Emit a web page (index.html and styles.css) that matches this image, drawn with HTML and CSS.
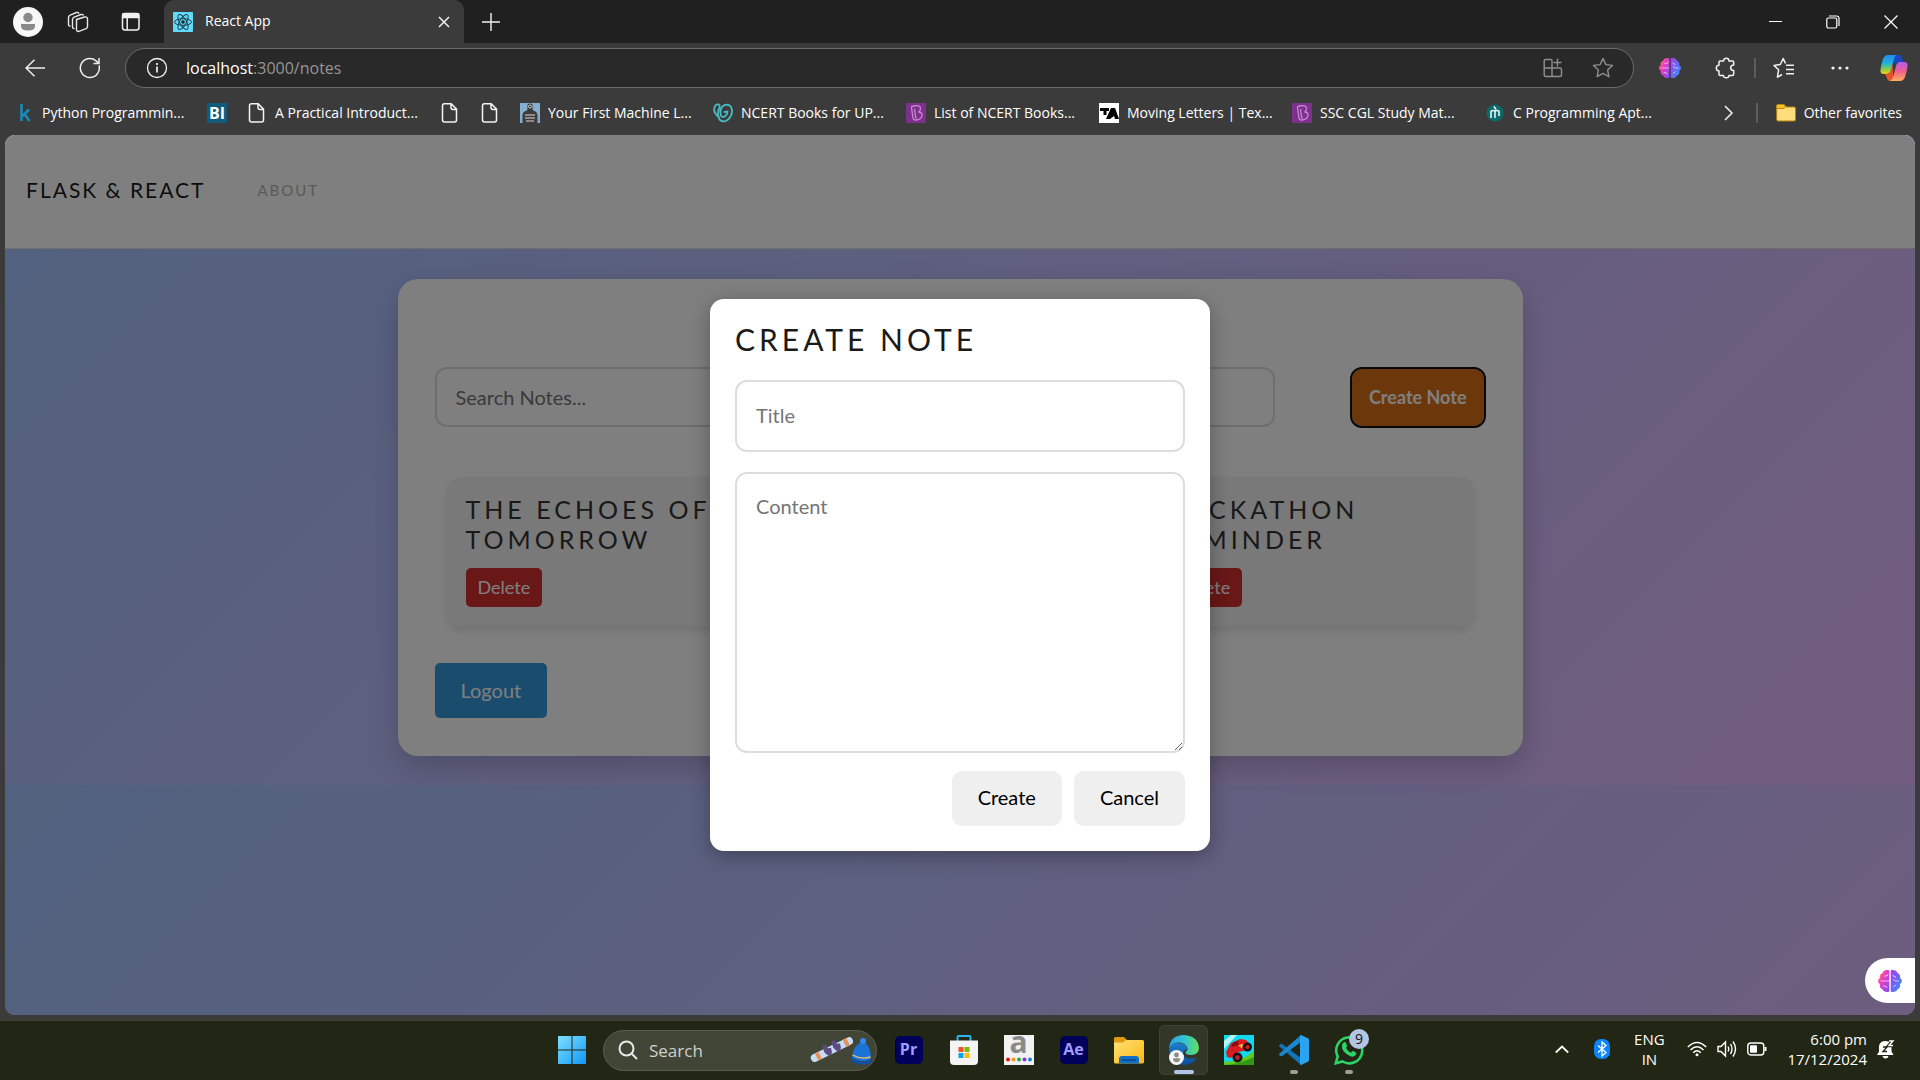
FILE: index.html
```
<!DOCTYPE html>
<html lang="en">
<head>
<meta charset="utf-8">
<title>React App</title>
<link rel="stylesheet" href="styles.css">
</head>
<body>
<svg class="defs" aria-hidden="true">
  <defs>
    <linearGradient id="brainL" x1="0" y1="0" x2="1" y2="1"><stop offset="0" stop-color="#ff9a2e"/><stop offset=".4" stop-color="#f03cc3"/><stop offset="1" stop-color="#7a4df0"/></linearGradient>
    <linearGradient id="brainR" x1="0" y1="0" x2="1" y2="1"><stop offset="0" stop-color="#b03df0"/><stop offset=".5" stop-color="#6a66f5"/><stop offset="1" stop-color="#27a4f5"/></linearGradient>
    <linearGradient id="copA" x1="0" y1="0" x2="0" y2="1"><stop offset="0" stop-color="#1f8cf0"/><stop offset=".45" stop-color="#22b3d8"/><stop offset=".75" stop-color="#8ccb4a"/><stop offset="1" stop-color="#f8d013"/></linearGradient>
    <linearGradient id="copB" x1="0" y1="0" x2="0" y2="1"><stop offset="0" stop-color="#b15cf0"/><stop offset=".5" stop-color="#f0608c"/><stop offset="1" stop-color="#ffae5c"/></linearGradient>
    <linearGradient id="winG" x1="0" y1="0" x2="1" y2="1"><stop offset="0" stop-color="#7fe0ff"/><stop offset="1" stop-color="#0f97f7"/></linearGradient>
    <linearGradient id="edgeA" x1="0" y1="0" x2="1" y2="0"><stop offset="0" stop-color="#2f9fe6"/><stop offset=".5" stop-color="#2fc2d6"/><stop offset="1" stop-color="#66e05a"/></linearGradient>
    <linearGradient id="edgeB" x1="0" y1="0" x2="0" y2="1"><stop offset="0" stop-color="#1b7fd0"/><stop offset="1" stop-color="#0d4a9c"/></linearGradient>
    <linearGradient id="foldG" x1="0" y1="0" x2="1" y2="1"><stop offset="0" stop-color="#ffe07a"/><stop offset="1" stop-color="#fbb90e"/></linearGradient>
    <symbol id="brain" viewBox="0 0 24 24">
      <path fill="url(#brainL)" d="M11.300 1.500C8 .3 5 2 4.500 4 2.500 4.500 1.200 7 2 9 -.5 10 -.5 14 2 15c-.8 2.500.4 4.500 2.400 5.200C5.500 22.800 9 23.700 11.300 22.400z"/>
      <path fill="url(#brainR)" d="M12.700 1.500C16 .3 19 2 19.500 4c2 .5 3.300 3 2.500 5 2.500 1 2.500 5 0 6 .8 2.500-.4 4.500-2.400 5.200-1.100 2.600-4.600 3.500-6.900 2.200z"/>
      <path fill="none" stroke="#ffffff" stroke-opacity=".65" stroke-width="1" d="M2.500 12h8.500M6 7h2q2 0 2-2M5 17h2q2 0 2 2M21 12h-4l-2-2M15 6q0 2 3 2M15 18l3-2"/>
    </symbol>
    <symbol id="doc" viewBox="0 0 20 20"><path fill="none" stroke="#f4f4f4" stroke-width="1.500" d="M4.500.8h6.700l5.300 5.300v11q0 2-2 2h-10q-2 0-2-2v-14.300q0-2 2-2zM11 1v3.500q0 2 2 2h3.500"/></symbol>
    <symbol id="bee" viewBox="0 0 20 20"><rect width="20" height="20" rx="1" fill="#7f2f8c"/><path fill="none" stroke="#c58bcf" stroke-width="1.300" d="M5.500 4.500q0-1.500 2-1.500 7-1.500 7 2.500 0 2.500-2 3.500 3.500 0 3.500 3 0 4.500-6 5-2.800.3-3-2zM8.500 6l1 8q.3 1.300 1.500.8"/></symbol>
  </defs>
</svg>

<header class="chrome">
  <div class="tabstrip">
    <button class="slot slot-avatar" aria-label="Profile"><svg width="30" height="30" viewBox="0 0 30 30"><circle cx="15" cy="15" r="15" fill="#f7f7f7"/><circle cx="15" cy="10.500" r="4.700" fill="#8a8a8a"/><path fill="#8a8a8a" d="M8 17h14v2q0 4.500-7 4.500T8 19z"/></svg></button>
    <button class="slot slot-53" aria-label="Workspaces"><svg width="22" height="22" viewBox="0 0 22 22" fill="none" stroke="#e8e8e8" stroke-width="1.400"><path d="M9.500 8.500l8-2.500q2.500-.6 3 1.500v8q0 1.500-1.500 2.200l-7 2.600q-2.300.6-2.500-1.500z"/><path d="M7.500 17.500q-2 .3-2-1.700V8.500q0-1.800 1.600-2.400L14 3.500q1.700-.4 2.600 1"/><path d="M3.500 15q-2 .3-2-1.700V6.500q0-1.800 1.600-2.400L9.500 1.500q1.700-.4 2.600 1"/></svg></button>
    <button class="slot slot-53" aria-label="Tab actions"><svg width="20" height="20" viewBox="0 0 20 20" fill="none" stroke="#f2f2f2" stroke-width="1.500"><rect x="1.500" y="1.500" width="16.500" height="16.500" rx="2.500"/><path d="M6.200 6v12"/><path fill="#f2f2f2" d="M2 2h15.500v3.500H2z"/></svg></button>
    <div class="tab">
      <svg width="20" height="20" viewBox="0 0 20 20"><rect width="20" height="20" rx="1" fill="#61dafb"/><g fill="none" stroke="#20404c" stroke-width="1"><ellipse cx="10" cy="10" rx="8.500" ry="3.300"/><ellipse cx="10" cy="10" rx="8.500" ry="3.300" transform="rotate(60 10 10)"/><ellipse cx="10" cy="10" rx="8.500" ry="3.300" transform="rotate(120 10 10)"/></g><circle cx="10" cy="10" r="1.800" fill="#16282f"/></svg>
      <span class="tab-title">React App</span>
      <button class="tab-close" aria-label="Close tab"><svg width="12" height="12" viewBox="0 0 12 12" stroke="#f2f2f2" stroke-width="1.500"><path d="M1 1l10 10M11 1L1 11"/></svg></button>
    </div>
    <button class="slot slot-53" aria-label="New tab"><svg width="18" height="18" viewBox="0 0 18 18" stroke="#f2f2f2" stroke-width="1.400"><path d="M9 0v18M0 9h18"/></svg></button>
    <div class="spacer"></div>
    <button class="slot slot-58" aria-label="Minimize"><svg width="13" height="13" viewBox="0 0 13 13" stroke="#fff"><path d="M0 6.500h13"/></svg></button>
    <button class="slot slot-58" aria-label="Restore"><svg width="14" height="14" viewBox="0 0 14 14" fill="none" stroke="#fff" stroke-width="1.200"><rect x=".8" y="3" width="10" height="10" rx="1.500"/><path d="M3 1h7.500q2.500 0 2.500 2.500V11"/></svg></button>
    <button class="slot slot-58" aria-label="Close"><svg width="14" height="14" viewBox="0 0 14 14" stroke="#fff" stroke-width="1.200"><path d="M.5.5l13 13M13.500.5l-13 13"/></svg></button>
  </div>

  <div class="toolbar">
    <button class="slot slot-tool" aria-label="Back"><svg width="20" height="18" viewBox="0 0 20 18" fill="none" stroke="#efefef" stroke-width="1.500"><path d="M20 9H1M9.500.7L1 9l8.500 8.300"/></svg></button>
    <button class="slot slot-tool" aria-label="Refresh"><svg width="22" height="22" viewBox="0 0 22 22" fill="none" stroke="#efefef" stroke-width="1.500"><path d="M20 8.500A9.500 9.500 0 1 1 16.800 3.600L19.700 6M20 1v5.500h-5.500"/></svg></button>
    <div class="address">
      <svg width="22" height="22" viewBox="0 0 22 22" fill="none" stroke="#f2f2f2" stroke-width="1.300"><circle cx="11" cy="11" r="9.500"/><path stroke-width="1.700" d="M11 9.500v6M11 6v2"/></svg>
      <span class="url">localhost<span class="url-path">:3000/notes</span></span>
      <button class="slot slot-50" aria-label="Install app"><svg width="20" height="20" viewBox="0 0 20 20" fill="none" stroke="#8f8f8f" stroke-width="1.400"><path d="M2.500 1.500H8q1 0 1 1V18.500H3q-1.800 0-1.800-1.800V3q0-1.500 1.300-1.500zM1.200 10h15.600q1.700 0 1.700 1.500V17q0 1.500-1.500 1.500H9M14.500.5v8M10.500 4.500h8"/></svg></button>
      <button class="slot slot-50" aria-label="Favorite"><svg width="22" height="22" viewBox="0 0 22 22" fill="none" stroke="#8f8f8f" stroke-width="1.400" stroke-linejoin="round"><path d="M11 1.500l2.900 6.100 6.600.8-4.900 4.600 1.300 6.700-5.900-3.300-5.900 3.300 1.300-6.700L1.500 8.400l6.600-.8z"/></svg></button>
    </div>
    <button class="slot slot-56" aria-label="Brain extension"><svg width="22" height="22"><use href="#brain"/></svg></button>
    <button class="slot slot-56" aria-label="Extensions"><svg width="22" height="22" viewBox="0 0 22 22" fill="none" stroke="#f2f2f2" stroke-width="1.500" stroke-linejoin="round"><path d="M5 4h3.500q0-2.700 2.700-2.700T14 4h3.500q1.200 0 1.200 1.200V8q-3 0-3 2.800t3 2.800V17q0 1.500-1.500 1.500H14q0 2.300-2.800 2.300T8.500 18.500H5q-1 0-1-1.200V14q-2.700 0-2.700-2.900T4 8.200V5.200Q4 4 5 4z"/></svg></button>
    <span class="rule"></span>
    <button class="slot slot-56" aria-label="Favorites"><svg width="22" height="22" viewBox="0 0 22 22" fill="none" stroke="#f2f2f2" stroke-width="1.500" stroke-linejoin="round"><path d="M12.500 6.500L10.200 1.500 7.300 7.500 1 8.400l4.600 4.400-1.200 7.400 4.600-2.700M13 8.200h8M13 12.500h8M13 16.800h8"/></svg></button>
    <button class="slot slot-56" aria-label="More"><svg width="18" height="4" viewBox="0 0 18 4" fill="#f2f2f2"><circle cx="2" cy="2" r="1.600"/><circle cx="9" cy="2" r="1.600"/><circle cx="16" cy="2" r="1.600"/></svg></button>
    <button class="slot slot-52" aria-label="Copilot"><svg width="28" height="28" viewBox="0 0 28 28"><path fill="#1747c4" d="M14 1h5q2 0 2.700 2L23 8h-5l-4 2z"/><path fill="url(#copA)" d="M8 1h9q-2 0-3 4l-3 11q-1 4-5 4H4q-4 0-3.500-4Q1 11 3 5 4.500 1 8 1z"/><path fill="#e8542a" d="M5 20q5 1 6-4l2-5v14q-1 2-3 2-2.500 0-3.500-4z"/><path fill="url(#copB)" d="M20 8h4q4 0 3.600 4-.6 5-2.600 11-1.500 4-5 4H9q3-.5 4-4l3-11q1-4 4-4z"/></svg></button>
  </div>

  <nav class="bookmarks">
    <a class="bm" href="#"><svg width="20" height="20" viewBox="0 0 20 20" fill="none" stroke="#1a8bb8" stroke-width="2.600"><path d="M7.500 1v17M15 6.500L8.500 13M10.500 11l5 7"/></svg><span class="bm-text">Python Programmin...</span></a>
    <a class="bm" href="#" aria-label="BI"><span class="bi">BI</span></a>
    <a class="bm" href="#"><svg width="20" height="20"><use href="#doc"/></svg><span class="bm-text">A Practical Introduct...</span></a>
    <a class="bm" href="#" aria-label="Page"><svg width="20" height="20"><use href="#doc"/></svg></a>
    <a class="bm" href="#" aria-label="Page"><svg width="20" height="20"><use href="#doc"/></svg></a>
    <a class="bm" href="#"><svg width="20" height="20" viewBox="0 0 20 20"><path fill="#86aed0" d="M0 0h20v20H0z"/><path fill="#3d3b3c" d="M7.500 1.500Q10-.5 12.500 1.500V6q0 1.500 3 2.500 2 1 2 3.500v8h-15v-8q0-2.500 2-3.500 3-1 3-2.500z"/><path stroke="#a9a5a1" stroke-width="1.500" d="M5 12h10M5 15h10M6 18h8"/><circle cx="10" cy="3.500" r="1.500" fill="none" stroke="#ccc"/></svg><span class="bm-text">Your First Machine L...</span></a>
    <a class="bm" href="#"><svg width="20" height="20" viewBox="0 0 20 20" fill="none" stroke="#46bcc4" stroke-width="1.800" stroke-linecap="round"><path d="M6 14Q.8 10 1.200 5.500 2 1 5.500 1.300 8 2 5.500 7 4 13 6.500 16.500q3.500 3.500 8 .5Q19.500 13 19 7q-.8-5-5-5.300Q8.500 2 7.500 8q-.5 6 2.500 6 4-.5 4.500-5.500l-3 .5"/></svg><span class="bm-text">NCERT Books for UP...</span></a>
    <a class="bm" href="#"><svg width="20" height="20"><use href="#bee"/></svg><span class="bm-text">List of NCERT Books...</span></a>
    <a class="bm" href="#"><svg width="20" height="20" viewBox="0 0 20 20"><path fill="#fff" d="M0 0h20v20H0z"/><path d="M1 5h9v3H7.500v4h-3V8H1zM12 5h4l4 11h-4l-1-3-4 3H7z"/></svg><span class="bm-text">Moving Letters | Tex...</span></a>
    <a class="bm" href="#"><svg width="20" height="20"><use href="#bee"/></svg><span class="bm-text">SSC CGL Study Mat...</span></a>
    <a class="bm" href="#"><svg width="20" height="20" viewBox="0 0 20 20"><circle cx="10" cy="10" r="8.500" fill="#0d6b6b"/><path fill="none" stroke="#e8f4f4" stroke-width="1.600" d="M6 15V9q0-1.500 2-1.500T10 9v6M10 9q0-1.500 2-1.500t2 1.500v4M9 3.500l2 3"/></svg><span class="bm-text">C Programming Apt...</span></a>
    <div class="spacer"></div>
    <button class="slot slot-53" aria-label="More bookmarks"><svg width="10" height="16" viewBox="0 0 10 16" fill="none" stroke="#f2f2f2" stroke-width="1.500"><path d="M1 1l7 7-7 7"/></svg></button>
    <span class="rule"></span>
    <a class="bm other" href="#"><svg width="20" height="20" viewBox="0 0 20 20"><path fill="#ffdc7c" stroke="#b8860b" d="M.7 3q0-1.500 1.500-1.500H8l2 2.500h8q1.500 0 1.500 1.500v11q0 1.500-1.500 1.500H2.200Q.7 18 .7 16.500z"/><path fill="#f5c22a" stroke="#b8860b" d="M.7 3q0-1.500 1.500-1.500H8l1.500 2L8 5.500H.7z"/></svg><span>Other favorites</span></a>
  </nav>
</header>

<main class="page">
  <nav class="navbar">
    <a class="brand" href="#">FLASK &amp; REACT</a>
    <a class="nav-link" href="#">ABOUT</a>
  </nav>

  <section class="card">
    <div class="search-row">
      <input class="search" type="text" placeholder="Search Notes..." aria-label="Search notes">
      <button class="create-note">Create Note</button>
    </div>
    <div class="notes">
      <article class="note">
        <h4>THE ECHOES OF TOMORROW</h4>
        <button class="delete">Delete</button>
      </article>
      <article class="note note-last">
        <h4>HACKATHON REMINDER</h4>
        <button class="delete">Delete</button>
      </article>
    </div>
    <button class="logout">Logout</button>
  </section>

  <div class="overlay">
    <form class="modal">
      <h2>CREATE NOTE</h2>
      <input class="field" type="text" placeholder="Title" aria-label="Title">
      <textarea class="field area" placeholder="Content" aria-label="Content"></textarea>
      <div class="actions">
        <button type="button" class="btn">Create</button>
        <button type="button" class="btn">Cancel</button>
      </div>
    </form>
  </div>
  <button class="brain-tab" aria-label="Assistant"><svg width="26" height="24"><use href="#brain"/></svg></button>
</main>

<footer class="taskbar">
  <div class="apps">
    <button class="app" aria-label="Start"><svg width="30" height="30" viewBox="0 0 30 30" fill="url(#winG)"><path d="M1 1h13.500v13.500H1zM15.500 1H29v13.500H15.500zM1 15.500h13.500V29H1zM15.500 15.500H29V29H15.500z"/></svg></button>
    <label class="task-search">
      <svg width="20" height="20" viewBox="0 0 20 20" fill="none" stroke="#e8e8e8" stroke-width="2"><circle cx="8.500" cy="8.500" r="7"/><path d="M13.500 13.500l5.500 5.500"/></svg>
      <input type="text" placeholder="Search" aria-label="Search">
      <svg width="62" height="32" viewBox="0 0 62 32"><g transform="rotate(-26 22 16)"><rect x="0" y="12" width="46" height="8" rx="4" fill="#c4dcf5"/><path fill="#e8905c" d="M6 12h4v8H6zM37 12h4v8h-4z"/><path fill="#5c4a80" d="M16 8l4 1v4l3 1-1 4-2 3-3-1-2-5zM26 8l4 1v4l3 1-1 4-2 3-3-1-2-5z"/></g><path fill="#1a74d8" d="M43 24q1-12 8-15h5q6 4 6 16-9 5-19-1z"/><circle cx="54" cy="7" r="3" fill="#2b8cf0"/><path fill="none" stroke="#f5c26b" stroke-width="1.400" d="M43.500 21q9 5 18 2"/><path fill="#134f9c" d="M42 24q9 5 20 2v3q-9 4-19-1z"/></svg>
    </label>
    <button class="app" aria-label="Premiere Pro"><span class="adobe">Pr</span></button>
    <button class="app" aria-label="Store"><svg width="30" height="32" viewBox="0 0 30 32"><path fill="none" stroke="#2cb5ee" stroke-width="2" d="M8.500 8V3q0-1 1-1h11q1 0 1 1v5"/><path fill="#f4f4f4" d="M1 6.500h28V27q0 4-4 4H5q-4 0-4-4z"/><path fill="#f25022" d="M9.500 13h5v5h-5z"/><path fill="#7fba00" d="M15.500 13h5v5h-5z"/><path fill="#00a4ef" d="M9.500 19h5v5h-5z"/><path fill="#ffb900" d="M15.500 19h5v5h-5z"/></svg></button>
    <button class="app" aria-label="Amazon"><span class="amz"><span class="amz-a">a</span><svg width="28" height="5" viewBox="0 0 28 5"><circle cx="3" cy="2.500" r="2" fill="#e11"/><circle cx="8.500" cy="2.500" r="2" fill="#f39a1e"/><circle cx="14" cy="2.500" r="2" fill="#20a84a"/><circle cx="19.500" cy="2.500" r="2" fill="#9030d0"/><circle cx="25" cy="2.500" r="2" fill="#1583e0"/></svg></span></button>
    <button class="app" aria-label="After Effects"><span class="adobe">Ae</span></button>
    <button class="app" aria-label="Explorer"><svg width="30" height="28" viewBox="0 0 30 28"><path fill="#e09a10" d="M0 2.500Q0 1 1.500 1H10l3 3-3 5H0z"/><path fill="url(#foldG)" d="M0 6.500h9l3-2.500h16.500Q30 4 30 5.500V26q0 1.500-1.500 1.500h-27Q0 27.500 0 26z"/><path fill="#1070c4" d="M5 27.500V23q0-3 3-3h14q3 0 3 3v4.500z"/><path stroke="#0a4a86" stroke-width="1.500" d="M8 24h14"/></svg></button>
    <button class="app active" aria-label="Edge"><svg width="30" height="30" viewBox="0 0 30 30"><path fill="url(#edgeB)" d="M0 15Q1 7 10 8q8 1 8 6-5 2-3.500 6 2 5 13 3-4 7-12.500 7Q1 29 0 15z"/><path fill="url(#edgeA)" d="M0 14Q1 0 15 0q14 1 15 13-.5 7-8 7-6 0-5.500-3 3-2 1.500-5Q15 7 9 7.500 2 8 0 14z"/><circle cx="7.500" cy="22.500" r="7.500" fill="#f7f7f7"/><circle cx="7.500" cy="20" r="2.400" fill="#8a8a8a"/><path fill="#8a8a8a" d="M4 23.300h7q0 4-3.500 4T4 23.300z"/></svg></button>
    <button class="app" aria-label="Game"><svg width="30" height="30" viewBox="0 0 30 30"><path fill="#12d8ee" d="M0 0h30v30H0z"/><path fill="#b5f4f8" d="M0 6l7-6h6L0 14z"/><path fill="#62c81c" d="M0 27q18 0 30-11v14H0z"/><path fill="#2f9a12" d="M0 30q16-1 30-8v8z"/><path fill="#d81c22" d="M2 17l5-9 9-4 6 1 5 5-3 5-10 2-7 6-4-1z"/><path fill="#7a1016" d="M7 12l2-4 5-2v4z"/><circle cx="13.500" cy="22.500" r="5" fill="#1c1014"/><circle cx="13.500" cy="22.500" r="2.200" fill="#c8232b"/><circle cx="23.500" cy="12" r="4.500" fill="#1c1014"/><circle cx="23.500" cy="12" r="2" fill="#c8232b"/><path stroke="#ffd21c" stroke-width="1.500" d="M15 11l3-1-1 3"/></svg></button>
    <button class="app running" aria-label="VS Code"><svg width="30" height="30" viewBox="0 0 30 30"><path fill="#1173b8" d="M2.500 8.500L22 23v7L.5 11.500q-.8-1 0-1.800z"/><path fill="#1a86d0" d="M2.500 21.500L22 7V0L.5 18.500q-.8 1 0 1.800z"/><path fill="#2aa3f0" d="M22 0l7 3.300q1 .6 1 1.700v20q0 1.100-1 1.700L22 30q-1 0-1-1V1q0-1 1-1z"/></svg></button>
    <button class="app running" aria-label="WhatsApp"><svg width="30" height="30" viewBox="0 0 30 30"><path fill="none" stroke="#2bd366" stroke-width="2.600" d="M1.800 28.300l1.900-7A13 13 0 1 1 8.600 26.500z"/><path fill="#2bd366" d="M9 8q2-2 3 0l1 2.500q.4 1-1 2.500 2 3.500 5 4.700 1.200-2 2.300-1.700l2.700 1.500q1 1-.5 2.800-2 2-5 1Q10 18.500 8 13 7.300 10 9 8z"/></svg><span class="badge">9</span></button>
  </div>
  <div class="tray">
    <button class="slot slot-40" aria-label="Hidden icons"><svg width="14" height="9" viewBox="0 0 14 9" fill="none" stroke="#fff" stroke-width="1.800"><path d="M.8 7.500L7 1.500l6.200 6"/></svg></button>
    <button class="slot slot-40" aria-label="Bluetooth"><svg width="16" height="20" viewBox="0 0 16 20"><rect width="16" height="20" rx="7" fill="#0a84ff"/><path fill="none" stroke="#fff" stroke-width="1.300" d="M4 6.500l8 7-4 3.500V3l4 3.500-8 7"/></svg></button>
    <button class="lang">ENG<br>IN</button>
    <button class="status" aria-label="Network, sound, battery">
      <svg width="20" height="16" viewBox="0 0 20 16" fill="none" stroke="#fff" stroke-width="1.500"><path d="M.8 6q9.200-9 18.400 0M3.500 9q6.500-6.500 13 0M6.200 11.700q3.800-3.800 7.600 0"/><circle cx="10" cy="13.800" r="1.500" fill="#fff" stroke="none"/></svg>
      <svg width="20" height="18" viewBox="0 0 20 18" fill="none" stroke="#fff" stroke-width="1.400"><path d="M1 6.500h3L8.500 2v14L4 11.500H1zM11 6.500q1.500 2.500 0 5M13.500 4q3 5 0 10M16 1.500q5 7.500 0 15"/></svg>
      <svg width="20" height="14" viewBox="0 0 20 14" fill="none" stroke="#fff" stroke-width="1.400"><rect x=".8" y="1" width="16" height="12" rx="3"/><rect x="3" y="3.300" width="7" height="7.400" rx="1" fill="#fff" stroke="none"/><path stroke-width="2" d="M18.500 5v4"/></svg>
    </button>
    <button class="clock">6:00 pm<br>17/12/2024</button>
    <button class="bell" aria-label="Notifications"><svg width="18" height="20" viewBox="0 0 18 20"><path fill="#fff" d="M2 7.500Q2.500 2 8.500 2t6 6v4.500l2 3.500H0l2-3.500zM5.500 17h6q-.5 2.500-3 2.500t-3-2.500z"/><path fill="none" stroke="#222612" stroke-width="1.400" d="M6 8h4l-4 4.500h4"/><path fill="none" stroke="#222612" stroke-width="3.500" d="M12 2h4l-4 4.500h4"/><path fill="none" stroke="#fff" stroke-width="1.400" d="M12 2h4l-4 4.500h4"/></svg></button>
  </div>
</footer>
</body>
</html>
```
FILE: styles.css
```
* { box-sizing: border-box; }

body {
  margin: 0;
  min-height: 100vh;
  display: flex;
  flex-direction: column;
  background: #3b3b3b;
  color: #fff;
  font-family: "Open Sans", "Noto Sans", sans-serif;
  font-size: 14px;
}

.defs { position: absolute; width: 0; height: 0; }

button { border: 0; padding: 0; background: none; color: inherit; font: inherit; }
a { color: inherit; text-decoration: none; }
svg { flex: none; display: block; }

.spacer { flex: 1; }
.slot { flex: none; display: flex; align-items: center; justify-content: center; }
.slot-avatar { width: 51px; padding-left: 5px; }
.slot-40 { width: 40px; }
.slot-50 { width: 50px; }
.slot-52 { width: 52px; }
.slot-53 { width: 53px; }
.slot-tool { width: 55px; }
.slot-56 { width: 56px; }
.slot-58 { width: 58px; }
.rule { flex: none; width: 2px; height: 20px; background: #5c5c5c; }

/* Browser chrome */
.tabstrip { display: flex; height: 43px; background: #202020; }
.tab {
  width: 300px;
  margin-left: 7px;
  padding: 0 14px 0 9px;
  display: flex;
  align-items: center;
  gap: 12px;
  background: #3b3b3b;
  border-radius: 10px 10px 0 0;
}
.tab-title { flex: 1; padding-bottom: 2px; }

.toolbar { display: flex; align-items: center; height: 49px; padding-left: 7px; }
.address {
  flex: 1;
  height: 40px;
  margin: 0 8px;
  padding: 0 5px 0 20px;
  display: flex;
  align-items: center;
  background: #292929;
  border: 1px solid #6b6b6b;
  border-radius: 20px;
}
.url { flex: 1; margin-left: 18px; font-size: 16px; }
.url-path { color: #959595; }

.bookmarks { display: flex; align-items: center; height: 43px; padding: 0 18px 2px 14px; }
.bm { flex: none; display: flex; align-items: center; gap: 8px; margin-right: 20px; white-space: nowrap; }
.bm-text { width: 145px; }
.bookmarks .other { margin: 0 0 0 18px; }
.bi { width: 20px; height: 20px; background: #135b7d; font-size: 16px; line-height: 20px; font-weight: 700; text-align: center; }

/* Web page */
.page {
  flex: 1;
  position: relative;
  margin: 0 5px 5px;
  border-radius: 10px;
  overflow: hidden;
  background: linear-gradient(135deg, #a1c4ff, #e6b9ff) 0 0 / 100% 650px;
  color: #1a1a1a;
  font-family: Lato, "Open Sans", sans-serif;
  font-size: 20px;
}
.navbar {
  display: flex;
  align-items: center;
  gap: 52px;
  height: 114px;
  padding: 0 21px 4px;
  background: #fff;
  border-bottom: 1px solid #dcdcdc;
}
.brand { font-size: 21px; letter-spacing: 2px; }
.nav-link { font-size: 15px; letter-spacing: 2px; color: #b4b4b4; }

.card {
  width: 1125px;
  max-width: 100%;
  margin: 30px auto 0;
  padding: 88px 37px 38px;
  background: #fff;
  border-radius: 20px;
  box-shadow: 0 10px 30px rgba(0, 0, 0, .2);
}
.search-row { display: flex; justify-content: space-between; align-items: center; }
.search {
  width: 80%;
  height: 60px;
  padding: 0 19px;
  border: 2px solid #ddd;
  border-radius: 12px;
  background: #fff;
  font: inherit;
}
::placeholder { color: #757575; opacity: 1; }
.create-note {
  height: 57px;
  margin-right: 2px;
  padding: 0 17px;
  background: #d87016;
  border-radius: 10px;
  outline: 2px solid #101010;
  color: #fff;
  font-size: 18px;
  font-weight: 700;
}
.notes {
  display: grid;
  grid-template-columns: repeat(3, 1fr);
  gap: 23px;
  padding: 50px 12px 37px;
}
.note {
  min-height: 149px;
  padding: 17px 19px;
  background: #f2f2f2;
  border-radius: 14px;
  box-shadow: 0 5px 10px rgba(0, 0, 0, .1);
}
.note-last { grid-column: 3; }
.note h4 { margin: 0 0 14px; font-size: 25px; font-weight: 400; line-height: 30px; letter-spacing: 4px; color: #333; }
.delete { height: 39px; padding: 0 12px 1px; background: #d32f2f; border-radius: 5px; color: #fff; font-size: 18px; }
.logout { display: block; height: 55px; padding: 0 26px 2px; background: #3498db; border-radius: 5px; color: #fff; }

.overlay {
  position: absolute;
  inset: 0;
  display: flex;
  align-items: center;
  justify-content: center;
  background: rgba(0, 0, 0, .5);
}
.modal {
  width: 500px;
  padding: 22px 25px 25px;
  background: #fff;
  border-radius: 14px;
  box-shadow: 0 5px 20px rgba(0, 0, 0, .3);
}
.modal h2 { margin: 0 0 23px; font-size: 30px; font-weight: 400; line-height: 36px; letter-spacing: 4px; }
.field {
  display: block;
  width: 100%;
  height: 72px;
  margin-bottom: 20px;
  padding: 0 19px 2px;
  border: 2px solid #ddd;
  border-radius: 12px;
  background: #fff;
  font: inherit;
}
.area { height: 281px; margin-bottom: 18px; padding: 20px 19px; }
.actions { display: flex; justify-content: flex-end; gap: 12px; }
.btn { height: 55px; padding: 0 26px 4px; background: #efefef; border-radius: 10px; color: #000; }

.brain-tab {
  position: absolute;
  right: 0;
  bottom: 12px;
  width: 50px;
  height: 45px;
  display: flex;
  align-items: center;
  justify-content: center;
  background: #fff;
  border-radius: 23px 0 0 23px;
}

/* Windows taskbar */
.taskbar {
  display: grid;
  grid-template-columns: 1fr auto 1fr;
  align-items: center;
  height: 60px;
  padding-bottom: 1px;
  background: #222614;
  border-top: 1px solid #3f4335;
}
.apps { grid-column: 2; display: flex; align-items: center; }
.app {
  position: relative;
  width: 49px;
  height: 50px;
  margin: 0 3px;
  display: flex;
  align-items: center;
  justify-content: center;
  border-radius: 6px;
}
.app.active { background: #33372a; box-shadow: inset 0 0 0 1px #3f4337; }
.app.active::after, .app.running::after {
  content: "";
  position: absolute;
  left: 50%;
  bottom: 1px;
  width: 8px;
  height: 4px;
  margin-left: -4px;
  border-radius: 2px;
  background: #9d9f97;
}
.app.active::after { width: 20px; margin-left: -10px; background: #b4c4e4; }
.task-search {
  width: 274px;
  height: 41px;
  margin: 0 4px;
  padding: 0 5px 0 14px;
  display: flex;
  align-items: center;
  background: #414536;
  border: 1px solid #5a5e50;
  border-radius: 21px;
}
.task-search input {
  flex: 1;
  min-width: 0;
  padding: 0 0 0 11px;
  border: 0;
  background: none;
  font: inherit;
  font-size: 17px;
}
.task-search ::placeholder { color: #d0d1cc; }
.adobe {
  width: 28px;
  height: 28px;
  background: #00005b;
  border-radius: 5px;
  color: #a09cff;
  font-size: 16px;
  line-height: 26px;
  font-weight: 700;
}
.amz { width: 30px; height: 30px; display: flex; flex-direction: column; align-items: center; justify-content: space-between; padding-bottom: 3px; background: #f2f2f2; }
.amz-a { height: 20px; color: #8a8a8a; font-size: 30px; line-height: 14px; font-weight: 700; }
.badge {
  position: absolute;
  top: 4px;
  right: 4px;
  width: 20px;
  height: 20px;
  border-radius: 10px;
  background: #b4c4e4;
  color: #111;
  line-height: 20px;
}
.tray { justify-self: end; display: flex; align-items: center; padding-bottom: 2px; font-size: 15px; line-height: 20px; }
.lang { width: 54px; text-align: center; }
.status { display: flex; align-items: center; gap: 10px; margin: 0 20px 0 11px; }
.clock { text-align: right; }
.bell { margin: 0 25px 0 10px; }
```
